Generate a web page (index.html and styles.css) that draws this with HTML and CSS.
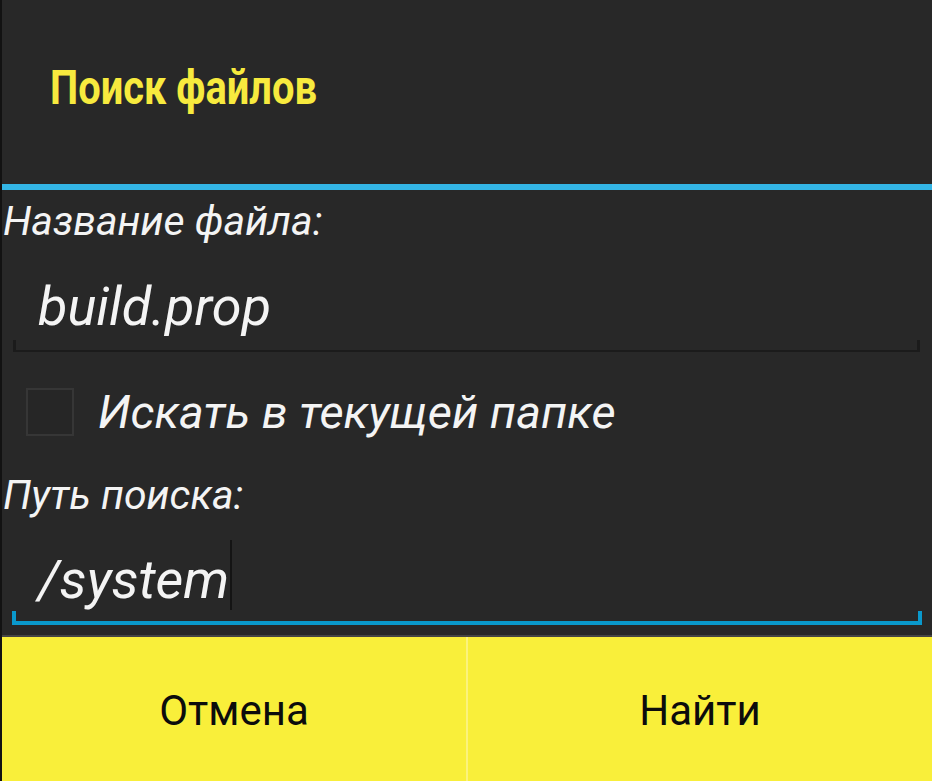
FILE: index.html
```html
<!DOCTYPE html>
<html lang="ru">
<head>
<meta charset="utf-8">
<title>Поиск файлов</title>
<link rel="stylesheet" href="styles.css">
</head>
<body>
<div class="dialog">
  <div class="header">
    <h1 class="title">Поиск файлов</h1>
  </div>
  <div class="accent-bar"></div>
  <div class="body">
    <div class="label label-first">Название файла:</div>
    <div class="field field-idle">
      <div class="field-text">build.prop</div>
      <div class="underline"></div>
    </div>
    <div class="check-row">
      <span class="checkbox"></span>
      <span class="check-label">Искать в текущей папке</span>
    </div>
    <div class="label label-second">Путь поиска:</div>
    <div class="field field-focus">
      <div class="field-text">/system<span class="cursor"></span></div>
      <div class="underline"></div>
    </div>
  </div>
  <div class="buttons">
    <button class="btn">Отмена</button>
    <button class="btn">Найти</button>
  </div>
</div>
</body>
</html>
```

FILE: styles.css
```css
html, body {
  margin: 0;
  padding: 0;
  background: #282828;
}
.dialog {
  width: 930px;
  height: 781px;
  border-left: 2px solid #121212;
  display: flex;
  flex-direction: column;
  font-family: Roboto, "Noto Sans", sans-serif;
  color: #ffffff;
  overflow: hidden;
}
.header {
  height: 184px;
  display: flex;
  align-items: center;
  padding-left: 48px;
  box-sizing: border-box;
}
.title {
  margin: 0;
  font-size: 48px;
  font-weight: 700;
  color: #f7ea3e;
  line-height: 1;
  display: inline-block;
  transform: scaleX(0.83);
  transform-origin: left center;
  white-space: nowrap;
  padding-bottom: 8px;
}
.accent-bar {
  height: 6px;
  background: #33b5e5;
}
.body {
  flex: 1;
  display: flex;
  flex-direction: column;
}
.label {
  font-size: 41px;
  font-style: italic;
  line-height: 48px;
  padding-left: 1px;
  color: #f4f4f4;
}
.label-first { margin-top: 7px; }
.label-second { margin-top: 35px; }
.field-text {
  font-size: 54px;
  font-style: italic;
  line-height: 62px;
  color: #f4f4f4;
  white-space: nowrap;
}
.field-idle {
  margin: 31px 12px 0 11px;
}
.field-idle .field-text {
  padding-left: 25px;
}
.field-idle .underline {
  margin-top: 2px;
  height: 12px;
  border: 3px solid #1b1b1b;
  border-top: none;
  border-bottom-width: 2px;
  box-sizing: border-box;
}
.field-focus {
  margin: 21px 10px 0 10px;
}
.field-focus .field-text {
  padding-left: 26px;
}
.field-focus .underline {
  margin-top: 0;
  height: 14px;
  border: 4px solid #0a99cc;
  border-top: none;
  box-sizing: border-box;
}
.cursor {
  display: inline-block;
  width: 2px;
  height: 70px;
  background: #141414;
  vertical-align: -12px;
  margin-left: 1px;
}
.check-row {
  margin-top: 36px;
  height: 48px;
  display: flex;
  align-items: center;
  padding-left: 24px;
}
.checkbox {
  width: 48px;
  height: 48px;
  box-sizing: border-box;
  border: 2px solid #363636;
  background: #262626;
  flex: none;
}
.check-label {
  margin-left: 24px;
  font-size: 47px;
  font-style: italic;
  line-height: 48px;
  color: #f4f4f4;
  white-space: nowrap;
}
.buttons {
  height: 146px;
  border-top: 2px solid #454545;
  box-sizing: border-box;
  display: flex;
  background: #f9ef3a;
}
.btn {
  flex: 1;
  border: none;
  margin: 0;
  padding: 0;
  background: #f9ef3a;
  font-family: Roboto, "Noto Sans", sans-serif;
  font-size: 42px;
  color: #0c0c0c;
  padding-top: 2px;
}
.btn + .btn {
  border-left: 2px solid #fbf37c;
}
```
